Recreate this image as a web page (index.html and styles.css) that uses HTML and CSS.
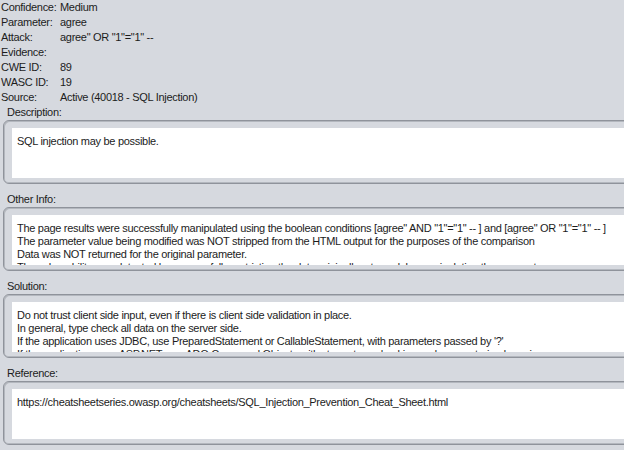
FILE: index.html
```html
<!DOCTYPE html>
<html>
<head>
<meta charset="utf-8">
<link rel="stylesheet" href="styles.css">
</head>
<body>
<div class="page">
  <div class="fields">
    <div class="row"><span class="lbl">Confidence:</span><span class="val">Medium</span></div>
    <div class="row"><span class="lbl">Parameter:</span><span class="val">agree</span></div>
    <div class="row"><span class="lbl">Attack:</span><span class="val">agree" OR "1"="1" --</span></div>
    <div class="row"><span class="lbl">Evidence:</span><span class="val"></span></div>
    <div class="row"><span class="lbl">CWE ID:</span><span class="val">89</span></div>
    <div class="row"><span class="lbl">WASC ID:</span><span class="val">19</span></div>
    <div class="row"><span class="lbl">Source:</span><span class="val">Active (40018 - SQL Injection)</span></div>
  </div>

  <section class="section">
    <div class="title">Description:</div>
    <div class="box"><div class="area">
      <div>SQL injection may be possible.</div>
    </div></div>
  </section>

  <section class="section">
    <div class="title">Other Info:</div>
    <div class="box"><div class="area">
      <div>The page results were successfully manipulated using the boolean conditions [agree" AND "1"="1" -- ] and [agree" OR "1"="1" -- ]</div>
      <div>The parameter value being modified was NOT stripped from the HTML output for the purposes of the comparison</div>
      <div>Data was NOT returned for the original parameter.</div>
      <div>The vulnerability was detected by successfully restricting the data originally returned, by manipulating the parameter</div>
    </div></div>
  </section>

  <section class="section">
    <div class="title">Solution:</div>
    <div class="box"><div class="area">
      <div>Do not trust client side input, even if there is client side validation in place.</div>
      <div>In general, type check all data on the server side.</div>
      <div>If the application uses JDBC, use PreparedStatement or CallableStatement, with parameters passed by '?'</div>
      <div>If the application uses ASP.NET, use ADO Command Objects with strong type checking and parameterized queries.</div>
    </div></div>
  </section>

  <section class="section">
    <div class="title">Reference:</div>
    <div class="box"><div class="area">
      <div>https://cheatsheetseries.owasp.org/cheatsheets/SQL_Injection_Prevention_Cheat_Sheet.html</div>
    </div></div>
  </section>
</div>
</body>
</html>
```

FILE: styles.css
```css
html, body {
  margin: 0;
  padding: 0;
  background: #d6d9df;
  overflow: hidden;
}
body {
  width: 624px;
  height: 450px;
  font-family: "Liberation Sans", Arial, sans-serif;
  font-size: 11px;
  letter-spacing: -0.3px;
  color: #1c1c1c;
}
.page {
  width: 624px;
  overflow: hidden;
}
.fields {
  display: flex;
  flex-direction: column;
  padding-left: 1px;
}
.row {
  display: grid;
  grid-template-columns: 59px 1fr;
  line-height: 15px;
  height: 15px;
  white-space: nowrap;
}
.section {
  display: flex;
  flex-direction: column;
  margin-bottom: 8px;
}
.title {
  line-height: 15px;
  height: 15px;
  padding-left: 7px;
}
.box {
  margin-left: 3px;
  width: 700px;
  height: 64px;
  box-sizing: border-box;
  border: 1px solid #8f939b;
  border-radius: 6px;
  box-shadow: inset 1px 1px 0 #b3b7be, inset -1px -1px 0 #b3b7be;
  padding: 7px 0 5px 8px;
  background: #d6d9df;
}
.area {
  background: #ffffff;
  height: 50px;
  overflow: hidden;
  padding: 7px 0 0 5px;
  box-sizing: border-box;
  line-height: 13px;
  white-space: nowrap;
}
```
